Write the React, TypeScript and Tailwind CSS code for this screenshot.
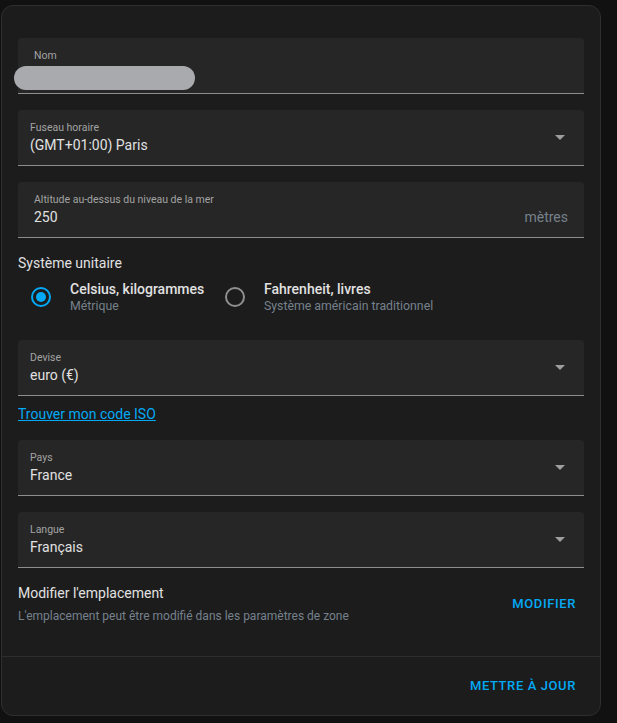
import React from "react";

const font = { fontFamily: "Roboto, 'Noto Sans', sans-serif" };

const Caret = () => (
  <svg width="10" height="5" viewBox="0 0 10 5" className="shrink-0" aria-hidden="true">
    <path d="M0 0 L10 0 L5 5 Z" fill="#9e9e9e" />
  </svg>
);

const TextField = ({ label, value, suffix }: { label: string; value: React.ReactNode; suffix?: string }) => (
  <div className="h-[56px] rounded-t-[4px] bg-[#262626] border-b border-[#8d8d8d] pl-4 pr-4 pt-[11px] flex">
    <div className="flex-1 min-w-0">
      <div className="text-[10.5px] leading-[14px] text-[#a3a3a3]">{label}</div>
      {value}
    </div>
    {suffix && <div className="self-end mb-[10px] text-[14px] leading-[20px] text-[#76818c]">{suffix}</div>}
  </div>
);

const SelectField = ({ label, value }: { label: string; value: string }) => (
  <div className="h-[56px] rounded-t-[4px] bg-[#262626] border-b border-[#8d8d8d] pl-3 pr-[19px] flex items-center">
    <div className="flex-1 pt-[1px]">
      <div className="text-[10.5px] leading-[14px] text-[#a3a3a3]">{label}</div>
      <div className="text-[14px] leading-[20px] text-[#e1e1e1]">{value}</div>
    </div>
    <Caret />
  </div>
);

const Radio = ({ checked }: { checked?: boolean }) => (
  <div
    className={
      "w-[20px] h-[20px] rounded-full border-2 flex items-center justify-center shrink-0 " +
      (checked ? "border-[#03a9f4]" : "border-[#8f8f8f]")
    }
  >
    {checked && <div className="w-[10px] h-[10px] rounded-full bg-[#03a9f4]" />}
  </div>
);

const UnitOption = ({ title, sub, checked, w }: { title: string; sub: string; checked?: boolean; w?: string }) => (
  <div className="flex items-center gap-[19px]">
    <Radio checked={checked} />
    <div className={w}>
      <div className="text-[14px] leading-[18px] font-medium text-[#e1e1e1] whitespace-nowrap">{title}</div>
      <div className="text-[12.3px] leading-[16px] text-[#76818c] whitespace-nowrap">{sub}</div>
    </div>
  </div>
);

export default function App() {
  return (
    <div className="min-h-screen bg-[#111111] pt-[5px] pl-[1px]" style={font}>
      <div className="w-[600px] rounded-[12px] border border-[#2e2e2e] bg-[#1c1c1c] overflow-hidden">
        <div className="px-4 pt-[32px] pb-[32px]">
          <div className="flex flex-col gap-4">
            <TextField
              label="Nom"
              value={<div className="mt-[3px] -ml-[20px] w-[181px] h-[24px] rounded-full bg-[#a9aaad]" />}
            />
            <SelectField label="Fuseau horaire" value="(GMT+01:00) Paris" />
            <TextField
              label="Altitude au-dessus du niveau de la mer"
              value={<div className="text-[14px] leading-[20px] text-[#e1e1e1]">250</div>}
              suffix="mètres"
            />
          </div>

          <div className="mt-[15px] text-[14px] leading-[20px] text-[#e1e1e1]">Système unitaire</div>
          <div className="mt-[7px] flex items-center gap-[18px] pl-[13px]">
            <UnitOption title="Celsius, kilogrammes" sub="Métrique" checked w="w-[137px]" />
            <UnitOption title="Fahrenheit, livres" sub="Système américain traditionnel" />
          </div>

          <div className="mt-[26px]">
            <SelectField label="Devise" value="euro (€)" />
          </div>
          <a href="#" className="block mt-[8px] w-fit text-[14px] leading-[20px] text-[#03a9f4] underline">
            Trouver mon code ISO
          </a>

          <div className="mt-[16px] flex flex-col gap-4">
            <SelectField label="Pays" value="France" />
            <SelectField label="Langue" value="Français" />
          </div>

          <div className="mt-[15px] flex items-center justify-between">
            <div>
              <div className="text-[14px] leading-[20px] text-[#e1e1e1]">Modifier l'emplacement</div>
              <div className="mt-[5px] text-[12px] leading-[16px] text-[#76818c]">
                L'emplacement peut être modifié dans les paramètres de zone
              </div>
            </div>
            <button className="h-[36px] px-2 text-[13px] font-medium tracking-[0.6px] uppercase text-[#03a9f4]">
              Modifier
            </button>
          </div>
        </div>

        <div className="border-t border-[#2e2e2e] h-[59px] px-4 flex items-center justify-end">
          <button className="h-[36px] px-2 text-[13px] font-medium tracking-[0.6px] uppercase text-[#03a9f4]">
            Mettre à jour
          </button>
        </div>
      </div>
    </div>
  );
}
